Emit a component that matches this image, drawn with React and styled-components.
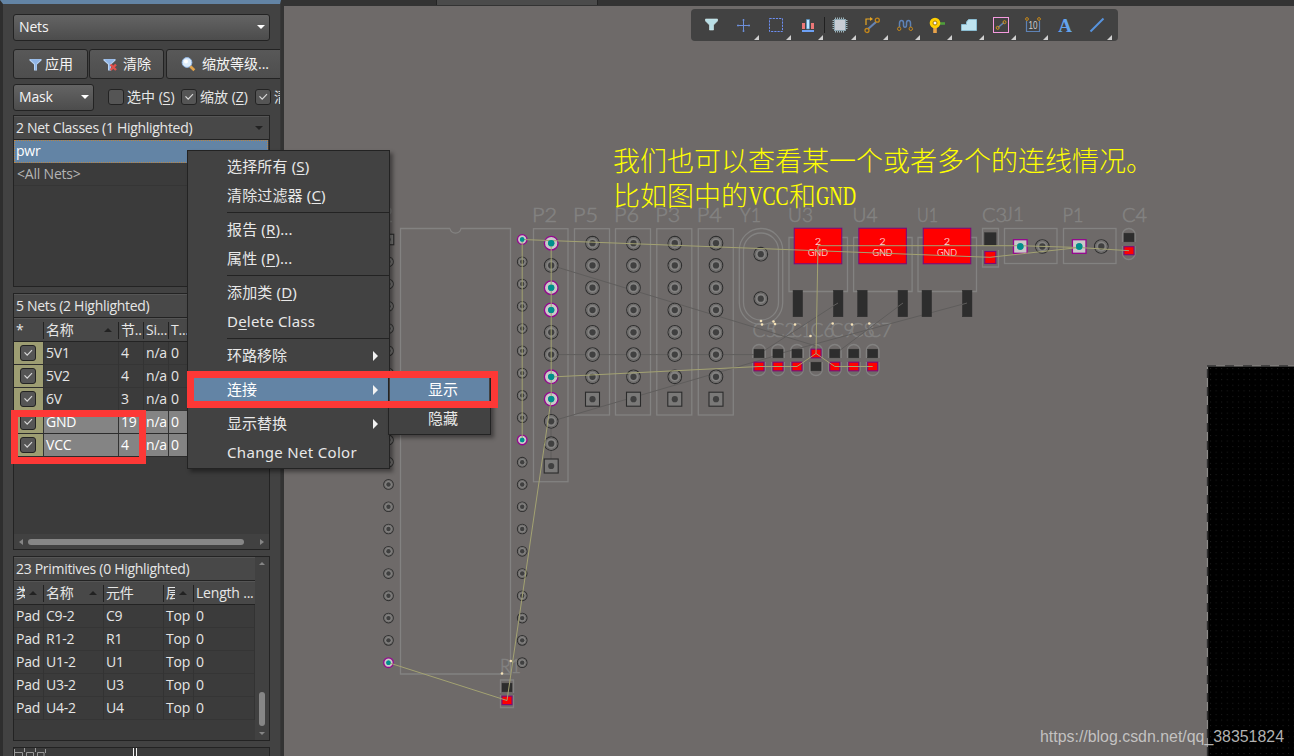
import React from "react";
import styled, { createGlobalStyle, css } from "styled-components";

const Global = createGlobalStyle`
  html, body { margin: 0; padding: 0; background: #2e2e2e; }
  *, *::before, *::after { box-sizing: border-box; }
`;

const INK = "#232323";

const Frame = styled.div`
  position: relative;
  display: grid;
  grid-template-columns: 284px 1fr;
  width: 1294px;
  height: 756px;
  overflow: hidden;
  background: #333;
  color: #e6e6e6;
  font: 14px/22px "Open Sans", "Noto Sans CJK SC", sans-serif;
  white-space: nowrap;
`;

/* ---------- side panel ---------- */

const Panel = styled.aside`
  width: 281px;
  height: 756px;
  overflow: hidden;
  border-left: 3px solid #2e2e2e;
  border-top: 4px solid #6384a5;
  border-right: 1px solid #383838;
  background: #424242;
  padding: 10px 0 0 10px;
  display: flex;
  flex-direction: column;
`;

const Row = styled.div`
  display: flex;
  align-items: center;
  flex: none;
  gap: ${(p) => p.$gap || 0}px;
  margin-bottom: ${(p) => p.$after || 0}px;
`;

const Select = styled.div`
  flex: none;
  display: flex;
  align-items: center;
  justify-content: space-between;
  width: ${(p) => p.$width}px;
  height: 27px;
  padding: 0 4px 1px 5px;
  border: 1px solid ${INK};
  border-radius: 3px;
  background: linear-gradient(#646464, #4c4c4c);
  color: #f4f4f4;
  letter-spacing: -0.15px;
`;

const Caret = styled.i`
  width: 0;
  height: 0;
  border: ${(p) => p.$size || 4}px solid transparent;
  ${(p) =>
    p.$up
      ? css`border-top-width: 0; border-bottom-color: ${p.$color || "#fff"};`
      : css`border-bottom-width: 0; border-top-color: ${p.$color || "#fff"};`}
`;

const Button = styled.div`
  flex: none;
  display: flex;
  align-items: center;
  gap: ${(p) => p.$gap}px;
  width: ${(p) => p.$width}px;
  height: 30px;
  padding-left: ${(p) => p.$pad}px;
  border: 1px solid ${INK};
  border-radius: 3px;
  background: linear-gradient(#585858, #4e4e4e);
  color: #f4f4f4;
  & + & { margin-left: 1px; }
  & + & + & { margin-left: 2px; }
`;

const Box = styled.span`
  flex: none;
  display: inline-flex;
  width: 16px;
  height: 16px;
  border: 1px solid ${INK};
  border-radius: 3px;
  background: #555;
  svg { display: block; width: 14px; height: 14px; }
`;

const Checks = styled(Row)`
  padding: 0 0 2px 14px;
`;

const Caption = styled.span`
  flex: none;
  width: ${(p) => p.$width}px;
  padding-left: 3px;
  u { text-underline-offset: 2px; }
`;

const List = styled.section`
  flex: none;
  display: flex;
  flex-direction: column;
  width: 257px;
  height: ${(p) => p.$height}px;
  margin-bottom: ${(p) => p.$after || 0}px;
  border: 1px solid ${INK};
  background: #3b3b3b;
`;

const ListTitle = styled.header`
  flex: none;
  display: flex;
  align-items: center;
  justify-content: space-between;
  height: 24px;
  padding: 0 6px 0 2px;
  border-bottom: 1px solid ${INK};
  border-top: 1px solid #555;
  background: #484848;
  letter-spacing: -0.3px;
`;

const ListRow = styled.div`
  flex: none;
  height: 23px;
  line-height: ${(p) => (p.$active ? 20 : 22)}px;
  padding-left: ${(p) => (p.$active ? 1 : 3)}px;
  margin-right: 1px;
  border: 1px ${(p) => (p.$active ? "dotted #b98545" : "solid #353535")};
  border-width: ${(p) => (p.$active ? "1px" : "0 0 1px")};
  background: ${(p) => (p.$active ? "#6384a5" : "none")};
  color: ${(p) => (p.$active ? "#fff" : "#b4b4b4")};
  letter-spacing: -0.2px;
`;

const Columns = styled.div`
  flex: none;
  display: grid;
  grid-template-columns: ${(p) => p.$cols};
  height: 24px;
  border-bottom: 1px solid ${INK};
  border-top: 1px solid #555;
  background: #484848;
`;

const Head = styled.span`
  display: flex;
  align-items: center;
  justify-content: space-between;
  overflow: hidden;
  padding: 0 7px 0 2px;
  background: linear-gradient(#222, #222) right center / 1px 17px no-repeat;
  letter-spacing: -0.2px;
  &:last-child { background: none; padding-right: 0; }
`;

const Clip = styled.span`
  overflow: hidden;
  width: ${(p) => (p.$width ? p.$width + "px" : "auto")};
`;

const Record = styled.div`
  flex: none;
  display: grid;
  grid-template-columns: ${(p) => p.$cols};
  height: 23px;
  background: ${(p) => (p.$on ? "#848484" : "none")};
  color: ${(p) => (p.$on ? "#fff" : "#e6e6e6")};
`;

const Cell = styled.span`
  overflow: hidden;
  padding-left: 2px;
  border-right: 1px solid #333;
  border-bottom: 1px solid ${(p) => (p.$strong ? "#2c2c2c" : "#353535")};
  letter-spacing: -0.2px;
`;

const SwatchCell = styled(Cell)`
  padding: 3px 0 0 6px;
  background: #9d9d72;
  line-height: 0;
`;

const HScroll = styled.div`
  display: flex;
  align-items: center;
  justify-content: space-between;
  height: 15px;
  margin-top: auto;
  padding: 0 5px;
  background: #414141;
`;

const Side = styled.i`
  width: 0;
  height: 0;
  border: 3.5px solid transparent;
  ${(p) =>
    p.$left
      ? css`border-left-width: 0; border-right: 4px solid #858585;`
      : css`border-right-width: 0; border-left: 4px solid #858585;`}
`;

const Thumb = styled.div`
  flex: none;
  width: ${(p) => p.$w}px;
  height: ${(p) => p.$h}px;
  margin: ${(p) => p.$margin};
  border-radius: 3px;
  background: #868686;
`;

const Split = styled.div`
  display: grid;
  grid-template-columns: 241px 14px;
  height: 100%;
`;

const VScroll = styled.div`
  display: flex;
  flex-direction: column;
  align-items: center;
  padding: 5px 0 5px;
  background: #414141;
`;

const Preview = styled.div`
  flex: none;
  width: 257px;
  height: 20px;
  border: 1px solid ${INK};
  background: #3b3b3b;
  svg { display: block; }
`;

const Tick = () => (
  <Box>
    <svg viewBox="0 0 14 14">
      <path d="M3.5 6.3 6.2 9.2 11 4.2" fill="none" stroke="#d8d8d8" strokeWidth="1.2" />
    </svg>
  </Box>
);

const FunnelIcon = ({ cross }) => (
  <svg width={cross ? 15 : 13} height="13" viewBox={cross ? "0 0 15 13" : "0 0 13 13"}>
    <path d="M.5 1H12.5V2.5L8 6.5V12.5H5V6.5L.5 2.5Z" fill="#b9d4f4" />
    <path d="M1 1.3H12L7.5 5.7V12H6V6Z" fill="#6f9bdc" opacity=".55" />
    {cross && <path d="M7.5 6.5 13 12M13 6.5 7.5 12" stroke="#e2504c" strokeWidth="2.4" />}
  </svg>
);

const MagnifierIcon = () => (
  <svg width="15" height="15" viewBox="0 0 15 15">
    <path d="M9 9 13.3 13.3" stroke="#e0a24a" strokeWidth="2.8" />
    <circle cx="6" cy="5.5" r="4.9" fill="#dcecfb" stroke="#8fb6e6" strokeWidth=".9" />
    <circle cx="5" cy="4.5" r="2" fill="#fff" />
  </svg>
);

const NET_COLS = "30px 75px 25px 25px 1fr";
const nets = [
  ["5V1", "4", false],
  ["5V2", "4", false],
  ["6V", "3", false],
  ["GND", "19", true],
  ["VCC", "4", true],
];

const PRIM_COLS = "30px 60px 60px 30px 1fr";
const primitives = ["C9", "R1", "U1", "U3", "U4"];

const NetsPanel = () => (
  <Panel>
    <Row $after={8}>
      <Select $width={257}>Nets<Caret $size={4.5} /></Select>
    </Row>
    <Row $after={5}>
      <Button $width={75} $pad={15} $gap={3}><FunnelIcon />应用</Button>
      <Button $width={75} $pad={13} $gap={5}><FunnelIcon cross />清除</Button>
      <Button $width={130} $pad={14} $gap={6}><MagnifierIcon />缩放等级...</Button>
    </Row>
    <Row $after={4}>
      <Select $width={81}>Mask<Caret $size={4.5} /></Select>
      <Checks>
        <Box />
        <Caption $width={57}>选中 (<u>S</u>)</Caption>
        <Tick />
        <Caption $width={58}>缩放 (<u>Z</u>)</Caption>
        <Tick />
        <Caption $width={40}>清除</Caption>
      </Checks>
    </Row>
    <List $height={172} $after={6}>
      <ListTitle>2 Net Classes (1 Highlighted)<Caret $color="#222" /></ListTitle>
      <ListRow $active>pwr</ListRow>
      <ListRow>&lt;All Nets&gt;</ListRow>
    </List>
    <List $height={257} $after={6}>
      <ListTitle>5 Nets (2 Highlighted)</ListTitle>
      <Columns $cols={NET_COLS}>
        <Head>*</Head>
        <Head>名称<Caret $up $color="#222" /></Head>
        <Head>节..</Head>
        <Head>Si...</Head>
        <Head>T...</Head>
      </Columns>
      {nets.map(([name, nodes, on]) => (
        <Record key={name} $cols={NET_COLS} $on={on}>
          <SwatchCell $strong><Tick /></SwatchCell>
          <Cell $strong={on}>{name}</Cell>
          <Cell $strong={on}>{nodes}</Cell>
          <Cell $strong={on}>n/a</Cell>
          <Cell $strong={on}>0</Cell>
        </Record>
      ))}
      <HScroll><Side $left /><Thumb $w={216} $h={6} $margin="0 auto 0 5px" /><Side /></HScroll>
    </List>
    <List $height={185} $after={6}>
      <Split>
        <div>
          <ListTitle>23 Primitives (0 Highlighted)</ListTitle>
          <Columns $cols={PRIM_COLS}>
            <Head><Clip $width={9}>类</Clip><Caret $up $color="#222" /></Head>
            <Head>名称<Caret $up $color="#222" /></Head>
            <Head>元件</Head>
            <Head><Clip $width={9}>层</Clip><Caret $up $color="#222" /></Head>
            <Head>Length ...</Head>
          </Columns>
          {primitives.map((id) => (
            <Record key={id} $cols={PRIM_COLS}>
              <Cell>Pad</Cell>
              <Cell>{id}-2</Cell>
              <Cell>{id}</Cell>
              <Cell>Top</Cell>
              <Cell>0</Cell>
            </Record>
          ))}
        </div>
        <VScroll>
          <Caret $up $size={3.5} $color="#858585" />
          <Thumb $w={6} $h={34} $margin="auto 0 6px" />
          <Caret $size={3.5} $color="#858585" />
        </VScroll>
      </Split>
    </List>
    <Preview>
      <svg width="255" height="9" viewBox="0 0 255 9">
        <path d="M.5 1V8M10.5 0V4M21.5 0V4M31.5 1V5M.5 4.5H8.5V9M12.5 9V4.5H19.5V9M23.5 9V4.5H30V9" stroke="#999" fill="none" />
        <path d="M119.5 0V9M122.5 0V9" stroke="#f4f4f4" />
      </svg>
    </Preview>
  </Panel>
);

/* ---------- workspace ---------- */

const Workspace = styled.main`
  position: relative;
  display: flex;
  flex-direction: column;
  height: 756px;
`;

const TabStrip = styled.div`
  flex: none;
  height: 6px;
  padding-left: 152px;
  background: #333;
  &::before {
    content: "";
    display: block;
    width: 162px;
    height: 5px;
    border: solid #252525;
    border-width: 0 1px;
    background: #4b4b4b;
  }
`;

const Sheet = styled.svg`
  display: block;
  flex: none;
  width: 1010px;
  height: 750px;
  background: #6e6a69;
`;

const Silk = styled.text`
  font: 300 20px "Lato", "DejaVu Sans", sans-serif;
  fill: #838281;
  stroke: #838281;
  stroke-width: 0.55;
`;

const PadText = styled.text`
  font: 300 10.5px "Lato", "Liberation Sans", sans-serif;
  fill: #ffe9e9;
  stroke: #ffe9e9;
  stroke-width: 0.15;
`;

const Note = styled.text`
  font: 300 27px "Noto Sans CJK SC", sans-serif;
  fill: #ffff00;
`;

const NoteLatin = styled(Note)`
  font-family: "Liberation Serif", serif;
`;

const Watermark = styled.text`
  font: 16.6px "Liberation Sans", sans-serif;
  fill: #d4d3d2;
  fill-opacity: 0.85;
`;

const PITCH = 22.27;
const steps = (n) => Array.from({ length: n }, (_, i) => i);

const Ring = ({ x, y, r = 6.8 }) => (
  <g>
    <circle cx={x} cy={y} r={r} fill="#838281" stroke="#2f2f2f" strokeWidth="1.1" />
    <circle cx={x} cy={y} r={r * 0.82} fill="none" stroke="#6b6968" strokeWidth={r * 0.17} />
    <circle cx={x} cy={y} r={r * 0.46} fill="#404040" />
  </g>
);

const SquarePad = ({ x, y, s = 14 }) => (
  <g>
    <rect x={x - s / 2} y={y - s / 2} width={s} height={s} fill="#7a7978" stroke="#2b2b2b" strokeWidth="1.1" />
    <circle cx={x} cy={y} r={s * 0.22} fill="#404040" />
  </g>
);

const LitPad = ({ x, y, r = 6.8 }) => (
  <g>
    <circle cx={x} cy={y} r={r} fill="#c9c9c9" stroke="#95068f" strokeWidth="1.3" />
    <circle cx={x} cy={y} r={r * 0.46} fill="#008f8c" />
  </g>
);

const LitSquare = ({ x, y }) => (
  <g>
    <rect x={x - 6.8} y={y - 6.8} width="13.6" height="13.6" fill="#c9c9c9" stroke="#95068f" strokeWidth="1.3" />
    <circle cx={x} cy={y} r="3.2" fill="#008f8c" />
  </g>
);

const Smd = ({ x, y, w = 10, h = 8.6, hot }) => (
  <rect
    x={x - w / 2}
    y={y - h / 2}
    width={w}
    height={h}
    fill={hot ? "#ff0000" : "#2d2d2d"}
    stroke={hot ? "#7d0a77" : "#2d2d2d"}
    strokeWidth={hot ? 1.1 : 0.5}
  />
);

const Label = ({ x, y = 221.5, w = 25, children }) => (
  <Silk x={x} y={y} textLength={w} lengthAdjust="spacingAndGlyphs">{children}</Silk>
);

const headers = [
  ["P5", 574.5, 592.5],
  ["P6", 615.5, 633.5],
  ["P3", 656.8, 674.8],
  ["P4", 698.3, 716],
];
const regulators = [["U3", 818, 25], ["U4", 882.6, 25], ["U1", 947, 21]];
const caps = [
  ["C5", 759, 752.5], ["C2", 778, 771.5], ["C1", 797, 791], ["C6", 816, 810.5],
  ["C9", 834.8, 830.5], ["C8", 853.8, 850.5], ["C7", 872.7, 868],
];
const litP2 = [0, 2, 3, 6, 7];

const Board = () => (
  <Sheet viewBox="284 6 1010 750">
    <defs>
      <pattern id="grid" x="1210" y="368" width="5.58" height="5.58" patternUnits="userSpaceOnUse">
        <rect width="1" height="1" fill="#1d1d1d" />
      </pattern>
    </defs>
    <rect x="1208" y="366" width="86" height="390" fill="#000" />
    <rect x="1208" y="366" width="86" height="390" fill="url(#grid)" />
    <path d="M1207.5 756V366M1207 366H1294" stroke="#8b8987" strokeWidth="1.2" fill="none" />
    <path d="M1207.5 756V366M1207 366H1294" stroke="#303030" strokeWidth="1.4" strokeDasharray="9 9" fill="none" />

    <g fill="none" stroke="#838281" strokeWidth="1.3">
      <path d="M450 228.5H400.5V674H510.5V228.5H461a5.6 5.6 0 0 1-11 0" />
      <rect x="533.5" y="228.7" width="34.5" height="253" />
      {headers.map(([id, x]) => <rect key={id} x={x} y="228.7" width="35" height="186.3" />)}
      <rect x="739.3" y="228.5" width="43.4" height="96" rx="21.7" />
      <rect x="743.5" y="233" width="35" height="87" rx="17.5" />
      {regulators.map(([id, x]) => (
        <path key={id} d={`M${x - 24} 237.5H${x - 29}V291.5H${x + 29.5}V237.5H${x + 24}`} />
      ))}
      {caps.map(([id, x]) => (
        <path key={id} d={`M${x - 6.3} 358V350.5a6.3 6 0 0 1 12.6 0V358M${x - 6.3} 362V369.5a6.3 6 0 0 0 12.6 0V362`} />
      ))}
      <path d="M982.5 245V228.5H998.5V245M982.5 250V267H998.5V250" />
      <rect x="1004.5" y="228.5" width="52.5" height="35" />
      <rect x="1063.5" y="228.5" width="52.5" height="35" />
      <path d="M1122.5 242V234.5a6.3 6 0 0 1 12.6 0V242M1122.5 246V253.5a6.3 6 0 0 0 12.6 0V246" />
      <path d="M500.5 693V680H513.5V693M500.5 695V707.5H513.5V695" />
      <path d="M388 208a3 3 0 0 1 0 6M388 221.5H392" />
    </g>

    <Label x={532}>P2</Label>
    {headers.map(([id, x]) => <Label key={id} x={x - 1.5}>{id}</Label>)}
    <Label x={740} w={21}>Y1</Label>
    {regulators.map(([id, x, w]) => <Label key={id} x={x - 30} w={w}>{id}</Label>)}
    <Label x={982}>C3</Label>
    <Label x={1005} y={220.5} w={19}>J1</Label>
    <Label x={1062.5} w={21}>P1</Label>
    <Label x={1122}>C4</Label>
    {caps.map(([id, , x]) => <Label key={id} x={x} y={337} w={id === "C1" ? 20 : 24}>{id}</Label>)}
    <Label x={500} y={673} w={21}>R1</Label>

    <g stroke="#5f5d5c" fill="none">
      <path d="M551 265.3 816 346M551 354.6H759M551 421.4 778 355M551 399V466" />
      <path d="M759 354 838 303M778 354 967 303M835 354 903 303" />
    </g>

    <SquarePad x={388.5} y={239.5} s={10.5} />
    {steps(18).map((i) => <Ring key={i} x={388.5} y={239.5 + PITCH * (i + 1)} r={4.8} />)}
    <LitPad x={388.5} y={662.7} r={4.8} />
    {steps(20).map((i) => {
      const Pad = i === 0 || i === 9 ? LitPad : Ring;
      return <Pad key={i} x={522.2} y={239.5 + PITCH * i} r={4.8} />;
    })}
    {steps(10).map((i) => {
      const Pad = litP2.includes(i) ? LitPad : Ring;
      return <Pad key={i} x={551.2} y={243.2 + PITCH * i} />;
    })}
    <SquarePad x={551.2} y={466} />
    {headers.map(([id, , x]) => (
      <g key={id}>
        {steps(7).map((i) => <Ring key={i} x={x} y={243.2 + PITCH * i} />)}
        <SquarePad x={x} y={399.2} />
      </g>
    ))}
    <Ring x={760.8} y={254.2} />
    <Ring x={760.8} y={298.7} />

    {regulators.map(([id, x]) => (
      <g key={id}>
        <Smd x={x} y={246} w={47.5} h={35.5} hot />
        <Smd x={x - 20.2} y={303.5} w={9.5} h={26.5} />
        <Smd x={x + 20.2} y={303.5} w={9.5} h={26.5} />
        <PadText x={x} y={245} textAnchor="middle">2</PadText>
        <PadText x={x - 10} y={256} textLength={20} lengthAdjust="spacingAndGlyphs">GND</PadText>
      </g>
    ))}
    <g stroke="#5f5d5c">
      <path d="M833 306 838 303M898 306.5 903 303M962 304.5 967 303" />
    </g>

    {caps.map(([id, x]) => (
      <g key={id}>
        <Smd x={x} y={353.5} hot={id === "C6"} />
        <Smd x={x} y={366.5} hot={id !== "C6"} />
      </g>
    ))}
    <Smd x={990.3} y={239} w={11.5} h={12.5} />
    <Smd x={990.3} y={257.5} w={11} h={12} hot />
    <LitSquare x={1020.3} y={246.5} />
    <Ring x={1042.3} y={246.5} />
    <LitSquare x={1079.2} y={246.5} />
    <Ring x={1101.3} y={246.5} />
    <Smd x={1129} y={237.5} />
    <Smd x={1129} y={250.7} h={8} hot />
    <Smd x={507} y={687.5} />
    <Smd x={507} y={700.4} h={8.4} hot />

    <g fill="none" stroke="#a3a272">
      <path d="M522.2 239.5V440M522.2 239.5 990 257.3 1079 247.5M818 245.7H1020L1079 247.5 1129 250.7" />
      <path d="M818 246 816 353.5 797 366.5H759L551.2 377M816 353.5 834.8 366.5H872.7" />
      <path d="M551.2 243V399L507 700.5 388.5 662.7" />
    </g>
    {litP2.map((i) => <circle key={i} cx="551.2" cy={243.2 + PITCH * i} r="3.1" fill="#008f8c" />)}
    {[[522.2, 239.5], [522.2, 440], [388.5, 662.7]].map(([x, y]) => (
      <circle key={x + y} cx={x} cy={y} r="2.2" fill="#008f8c" />
    ))}
    <circle cx="1020.3" cy="246.5" r="3.2" fill="#008f8c" />
    <circle cx="1079.2" cy="246.5" r="3.2" fill="#008f8c" />
    <g fill="#f5e2b8">
      {[[761, 321], [762, 324.5], [773.5, 321.5], [775, 324], [795, 324.5], [810.5, 336], [832.7, 323.5], [852, 324.5], [869.3, 323.5], [510.8, 661], [502, 673.5]].map(([x, y]) => (
        <circle key={x} cx={x} cy={y} r="1.3" />
      ))}
    </g>

    <Note x="613" y="171" textLength="540">我们也可以查看某一个或者多个的连线情况。</Note>
    <Note x="613" y="206" textLength="135">比如图中的</Note>
    <NoteLatin x="748.5" y="205" textLength="40" lengthAdjust="spacingAndGlyphs">VCC</NoteLatin>
    <Note x="789" y="206">和</Note>
    <NoteLatin x="816" y="205" textLength="40" lengthAdjust="spacingAndGlyphs">GND</NoteLatin>
    <Watermark x="1040" y="742.3" textLength="244" lengthAdjust="spacingAndGlyphs">https://blog.csdn.net/qq_38351824</Watermark>
  </Sheet>
);

/* ---------- floating toolbar ---------- */

const Toolbar = styled.div`
  position: absolute;
  left: 407px;
  top: 9px;
  display: flex;
  width: 427px;
  height: 32px;
  padding-left: 4px;
  border-radius: 4px;
  background: #424242;
`;

const Tool = styled.div`
  position: relative;
  flex: none;
  width: 32px;
  height: 32px;
  padding: 8px 0 0 8px;
  line-height: 0;
  ${(p) => p.$divider && css`
    margin-left: 1px;
    &::before { content: ""; position: absolute; left: 0; top: 8px; width: 1px; height: 16px; background: #202020; }
  `}
  ${(p) => p.$more && css`
    &::after {
      content: "";
      position: absolute;
      right: 0;
      bottom: 1px;
      border-left: 5px solid transparent;
      border-bottom: 5px solid #d0d0d0;
    }
  `}
`;

const tools = [
  <path d="M2.5 2H14.5V4L10.5 8V13H6.5V8L2.5 4Z" fill="#b9dfe6" stroke="#d5eef2" strokeWidth=".6" />,
  <g stroke="#6d8ed8" fill="none"><path d="M8.5 2V15M2 8.5H15" /><path d="M7.5 3h2M7.5 14h2M3 7.5v2M14 7.5v2" /></g>,
  <rect x="2.5" y="1.5" width="13" height="13" fill="none" stroke="#6d8ef0" strokeDasharray="2.2 1" />,
  <g transform="translate(1 0)"><path d="M2 6h3v6H2zM11 6h3v6h-3z" fill="#ec7777" /><path d="M6.5 2.5h3V12h-3z" fill="#b9e5ff" stroke="#4f8dc0" strokeWidth=".7" /><path d="M2 14h12" stroke="#6da0f4" strokeWidth="2" /></g>,
  <g><path d="M3.5 .5V15.5M5.5 .5V15.5M7.5 .5V15.5M9.5 .5V15.5M11.5 .5V15.5M.5 3.5H15.5M.5 5.5H15.5M.5 7.5H15.5M.5 9.5H15.5M.5 11.5H15.5" stroke="#a9c3c9" strokeWidth=".9" /><rect x="2.5" y="2.5" width="11" height="11" fill="#c8ccd3" stroke="#8ba4b0" /></g>,
  <g fill="none"><path d="M4 12 12 5" stroke="#6583b3" strokeWidth="2.2" /><path d="M2 8V2H7" stroke="#e8a723" strokeWidth="1.2" /><path d="M6 0v4l3-2z" fill="#e8a723" /><circle cx="3" cy="13.5" r="2" stroke="#c5871a" strokeWidth="1.3" /><circle cx="13.3" cy="3.2" r="2" stroke="#c5871a" strokeWidth="1.3" /></g>,
  <g fill="none" transform="translate(1 0)"><path d="M2.5 10V6.5Q2.5 3.5 4.5 3.5T6.5 6V8Q6.5 10.3 8 10.3T9.5 8V6Q9.5 3.5 11.5 3.5T13.5 6.5V10" stroke="#5e82b5" strokeWidth="1.5" /><circle cx="2.2" cy="11.8" r="1.7" stroke="#c5871a" /><circle cx="13.8" cy="11.8" r="1.7" stroke="#c5871a" /></g>,
  <g transform="translate(1 0)"><path d="M6 8V16" stroke="#e9a34a" strokeWidth="3.6" /><path d="M9 6.5H16" stroke="#4f9e3b" strokeWidth="2.6" /><circle cx="6" cy="6" r="5.3" fill="#ffd000" /><circle cx="6" cy="6" r="2" fill="#f8f8f8" stroke="#aa7b00" /></g>,
  <path transform="translate(1 0)" d="M.5 13.5V7.5H5.5V5L7.5 2.5H15.5V13.5Z" fill="#bfe3ef" stroke="#8bbdd2" />,
  <g fill="none" transform="translate(1 0)"><rect x=".5" y=".5" width="15" height="15" stroke="#f59adf" /><path d="M5 10.5 11 5.5" stroke="#6583b3" strokeWidth="1.6" /><circle cx="4.7" cy="10.8" r="1.5" stroke="#d3951d" /><circle cx="11.5" cy="5.2" r="1.5" stroke="#d3951d" /></g>,
  <g fill="none" transform="translate(1 0)"><path d="M1.5 4V14.5H14.5V4" stroke="#5e82b5" strokeWidth="1.2" /><circle cx="2" cy="2" r="1.4" stroke="#c5871a" /><circle cx="14" cy="2" r="1.4" stroke="#c5871a" /><text x="8" y="12" textAnchor="middle" fontSize="10" textLength="9" lengthAdjust="spacingAndGlyphs" fontFamily="Liberation Sans, sans-serif" fill="#ccc">10</text></g>,
  <text x="9" y="15" textAnchor="middle" fontSize="19" fontWeight="700" fontFamily="Liberation Serif, serif" fill="#62a4ee">A</text>,
  <path d="M2.5 14.5 15.5 1.5" stroke="#5793dd" strokeWidth="2" />,
];

const ActiveBar = () => (
  <Toolbar>
    {tools.map((art, i) => (
      <Tool key={i} $divider={i === 4} $more={i !== 0 && i !== 11}>
        <svg width="16" height="16" viewBox="0 0 16 16" overflow="visible">{art}</svg>
      </Tool>
    ))}
  </Toolbar>
);

/* ---------- context menu ---------- */

const Menu = styled.div`
  position: absolute;
  left: ${(p) => p.$x}px;
  top: ${(p) => p.$y}px;
  width: ${(p) => p.$width}px;
  padding: 2px 1px 0;
  height: ${(p) => p.$height}px;
  border: 1px solid ${INK};
  background: #424242;
  box-shadow: 3px 3px 4px rgba(0, 0, 0, 0.4);
  font: 15px/25px "Noto Sans", "Noto Sans CJK SC", sans-serif;
`;

const MenuItem = styled.div`
  display: flex;
  align-items: center;
  justify-content: space-between;
  height: 29px;
  padding: 0 10px 2px 38px;
  background: ${(p) => (p.$on ? "#6384a5" : "none")};
  color: ${(p) => (p.$on ? "#fff" : "#e8e8e8")};
  letter-spacing: ${(p) => p.$track || 0}px;
  u { text-underline-offset: 2px; }
`;

const Rule = styled.div`
  height: 5px;
  margin: 0 -1px 0 38px;
  &::before { content: ""; display: block; height: 2px; border-bottom: 1px solid ${INK}; }
`;

const Arrow = styled.i`
  border: 5px solid transparent;
  border-right: 0;
  border-left-color: #f2f2f2;
`;

const Marker = styled.div`
  position: absolute;
  left: ${(p) => p.$x}px;
  top: ${(p) => p.$y}px;
  width: ${(p) => p.$w}px;
  height: ${(p) => p.$h}px;
  border: 7px solid #fd3836;
`;

const ContextMenu = () => (
  <>
    <Menu $x={187} $y={150} $width={203} $height={319}>
      <MenuItem $track={0.15}><span>选择所有 (<u>S</u>)</span></MenuItem>
      <MenuItem $track={0.15}><span>清除过滤器 (<u>C</u>)</span></MenuItem>
      <Rule />
      <MenuItem $track={0.15}><span>报告 (<u>R</u>)...</span></MenuItem>
      <MenuItem $track={0.15}><span>属性 (<u>P</u>)...</span></MenuItem>
      <Rule />
      <MenuItem $track={0.15}><span>添加类 (<u>D</u>)</span></MenuItem>
      <MenuItem $track={0.2}><span>D<u>e</u>lete Class</span></MenuItem>
      <Rule />
      <MenuItem>环路移除<Arrow /></MenuItem>
      <Rule />
      <MenuItem $on>连接<Arrow /></MenuItem>
      <Rule />
      <MenuItem>显示替换<Arrow /></MenuItem>
      <MenuItem $track={0.32}>Change Net Color</MenuItem>
    </Menu>
    <Menu $x={388} $y={373} $width={103} $height={62}>
      <MenuItem $on>显示</MenuItem>
      <MenuItem>隐藏</MenuItem>
    </Menu>
  </>
);

export default function App() {
  return (
    <>
      <Global />
      <Frame>
        <NetsPanel />
        <Workspace>
          <TabStrip />
          <Board />
          <ActiveBar />
        </Workspace>
        <ContextMenu />
        <Marker $x={187} $y={371} $w={311} $h={37} />
        <Marker $x={11} $y={410} $w={135} $h={54} />
      </Frame>
    </>
  );
}
